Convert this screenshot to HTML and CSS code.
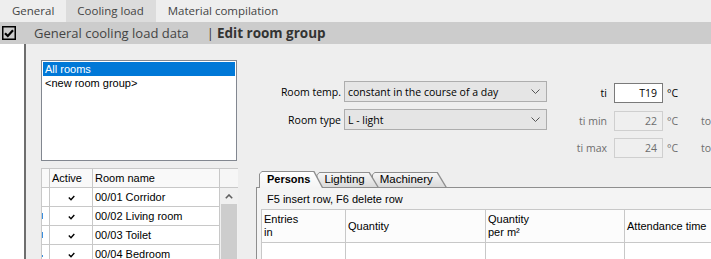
FILE: index.html
```html
<!DOCTYPE html>
<html>
<head>
<meta charset="utf-8">
<link rel="stylesheet" href="styles.css">
</head>
<body>
<div class="app">
  <div class="topnav">
    <div class="nav-tab">General</div>
    <div class="nav-tab active">Cooling load</div>
    <div class="nav-tab">Material compilation</div>
  </div>
  <div class="bar">
    <svg class="chk" width="14" height="14" viewBox="0 0 14 14"><rect x="0.75" y="0.75" width="12.5" height="12.5" fill="none" stroke="#000" stroke-width="1.5"/><path d="M3 7.2 L5.8 10 L11 4.2" fill="none" stroke="#000" stroke-width="2.2"/></svg>
    <span class="crumb">General cooling load data</span>
    <span class="sep">|</span>
    <span class="crumb-b">Edit room group</span>
  </div>
  <div class="main">
    <div class="gutter"></div>
    <div class="content">
      <div class="leftcol">
        <div class="listbox">
          <div class="li sel">All rooms</div>
          <div class="li">&lt;new room group&gt;</div>
        </div>
        <table class="rooms">
          <colgroup><col class="c-idx"><col class="c-act"><col class="c-name"><col class="c-sb"></colgroup>
          <tr class="rh"><th></th><th>Active</th><th>Room name</th><th class="sbh"></th></tr>
          <tr class="rr"><td class="idx"></td><td class="act"><svg width="7" height="6" viewBox="0 0 7 6"><path d="M0.8 2.6 L3 4.8 L6.3 1" fill="none" stroke="#000" stroke-width="1.4"/></svg></td><td>00/01 Corridor</td>
            <td class="sb" rowspan="4"><div class="sb-up"><svg width="8" height="5" viewBox="0 0 8 5"><path d="M0.8 4.2 L4 1 L7.2 4.2" fill="none" stroke="#606060" stroke-width="1.6"/></svg></div><div class="sb-thumb"></div></td></tr>
          <tr class="rr"><td class="idx"><span class="mark"></span></td><td class="act"><svg width="7" height="6" viewBox="0 0 7 6"><path d="M0.8 2.6 L3 4.8 L6.3 1" fill="none" stroke="#000" stroke-width="1.4"/></svg></td><td>00/02 Living room</td></tr>
          <tr class="rr"><td class="idx"><span class="mark"></span></td><td class="act"><svg width="7" height="6" viewBox="0 0 7 6"><path d="M0.8 2.6 L3 4.8 L6.3 1" fill="none" stroke="#000" stroke-width="1.4"/></svg></td><td>00/03 Toilet</td></tr>
          <tr class="rr"><td class="idx"><span class="mark short"></span></td><td class="act"><svg width="7" height="6" viewBox="0 0 7 6"><path d="M0.8 2.6 L3 4.8 L6.3 1" fill="none" stroke="#000" stroke-width="1.4"/></svg></td><td>00/04 Bedroom</td></tr>
        </table>
      </div>
      <div class="rightcol">
        <div class="form">
          <div class="selects">
            <span class="flabel">Room temp.</span>
            <div class="select"><span>constant in the course of a day</span><svg width="9" height="5" viewBox="0 0 9 5"><path d="M0.5 0.5 L4.5 4.5 L8.5 0.5" fill="none" stroke="#555" stroke-width="1"/></svg></div>
            <span class="flabel">Room type</span>
            <div class="select"><span>L - light</span><svg width="9" height="5" viewBox="0 0 9 5"><path d="M0.5 0.5 L4.5 4.5 L8.5 0.5" fill="none" stroke="#555" stroke-width="1"/></svg></div>
          </div>
          <div class="temps">
            <span class="tlabel">ti</span><div class="tinput">T19</div><span class="unit">°C</span><span></span>
            <span class="tlabel dim">ti min</span><div class="tinput off">22</div><span class="unit dim">°C</span><span class="to">to</span>
            <span class="tlabel dim">ti max</span><div class="tinput off">24</div><span class="unit dim">°C</span><span class="to">to<span class="warn"></span></span>
          </div>
        </div>
        <div class="tabctl">
          <div class="ptabs">
            <div class="ptab sel t1"><div class="ptab-in">Persons</div></div>
            <div class="ptab t2"><div class="ptab-in">Lighting</div></div>
            <div class="ptab t3"><div class="ptab-in">Machinery</div></div>
          </div>
          <div class="panel">
            <div class="hint">F5 insert row, F6 delete row</div>
            <table class="ptable">
              <colgroup><col class="p1"><col class="p2"><col class="p3"><col class="p4"></colgroup>
              <tr class="ph"><th>Entries<br>in</th><th>Quantity</th><th>Quantity<br>per m²</th><th>Attendance time</th></tr>
              <tr class="pr"><td></td><td></td><td></td><td></td></tr>
            </table>
          </div>
        </div>
      </div>
    </div>
  </div>
</div>
</body>
</html>
```
FILE: styles.css
```css
html, body {
  margin: 0;
  padding: 0;
}
body {
  width: 711px;
  height: 259px;
  overflow: hidden;
  background: #eeeeee;
}
.app {
  width: 711px;
  height: 259px;
  overflow: hidden;
}
.topnav {
  display: flex;
  height: 22px;
  background: #eeeeee;
  font-family: "Open Sans", sans-serif;
  font-size: 11.5px;
  color: #444;
}
.nav-tab {
  padding: 0 12px;
  line-height: 22px;
}
.nav-tab.active {
  background: #dcdcdc;
  padding: 0 12px 0 11px;
}
.bar {
  height: 22px;
  background: #cccccc;
  display: flex;
  align-items: center;
  font-family: "Open Sans", sans-serif;
  font-size: 13px;
  color: #444;
}
.chk {
  margin-left: 2px;
  flex: none;
}
.crumb {
  margin-left: 18px;
}
.sep {
  margin: 0 3px 0 18px;
  color: #333;
}
.crumb-b {
  font-weight: 700;
  font-size: 13.5px;
  color: #333;
}
.main {
  display: flex;
  height: 215px;
}
.gutter {
  width: 24px;
  flex: none;
  background: #ffffff;
  border-right: 2px solid #6e6e6e;
}
.content {
  flex: 1;
  display: flex;
  background: #eeeeee;
  min-width: 0;
}
.leftcol {
  margin-left: 15px;
  padding-top: 16px;
  width: 196px;
  flex: none;
}
.listbox {
  box-sizing: border-box;
  width: 196px;
  height: 101px;
  border: 1px solid #828790;
  background: #fff;
  padding: 1px;
  font-family: "Liberation Sans", Arial, sans-serif;
  font-size: 11px;
  color: #000;
}
.li {
  height: 14px;
  line-height: 14px;
  padding-left: 2px;
}
.li.sel {
  background: #0078d7;
  color: #fff;
}
.rooms {
  margin-top: 7px;
  border-collapse: collapse;
  table-layout: fixed;
  width: 196px;
  font-family: "Liberation Sans", Arial, sans-serif;
  font-size: 11px;
  color: #000;
  background: #fff;
}
.c-idx { width: 8px; }
.c-act { width: 43px; }
.c-name { width: 127px; }
.c-sb { width: 18px; }
.rooms th, .rooms td {
  border: 1px solid #c8c8c8;
  padding: 0 0 0 2px;
  text-align: left;
  font-weight: normal;
  white-space: nowrap;
  overflow: hidden;
  line-height: 13px;
}
.rooms .rh th {
  height: 19px;
  box-sizing: border-box;
  background: #f9f9f9;
}
.rooms .rh th.sbh { border-right: none; background: #f6f6f6; }
.rooms .rr td {
  height: 17px;
  box-sizing: border-box;
}
.rooms td.act { text-align: center; padding: 0; }
.rooms td.idx { padding: 0; background: #fff; }
.mark {
  display: block;
  width: 1px;
  height: 6px;
  margin-left: 0;
  background: #3a8fe0;
}
.mark.short { height: 2px; margin-top: 4px; }
.rooms td.sb {
  padding: 0;
  vertical-align: top;
  background: #f0f0f0;
  border-top: 1px solid #c8c8c8;
  border-bottom: none;
  border-right: none;
}
.sb-up {
  height: 16px;
  display: flex;
  align-items: center;
  justify-content: center;
}
.sb-thumb {
  height: 60px;
  margin: 0 1px 0 1px;
  background: #cdcdcd;
}
.rightcol {
  margin-left: 18px;
  flex: none;
  width: 500px;
}
.form {
  display: flex;
  padding-top: 37px;
  font-family: "Open Sans", sans-serif;
  font-size: 10.5px;
  color: #000;
}
.selects {
  display: grid;
  grid-template-columns: 86px 203px;
  grid-auto-rows: 21px;
  column-gap: 3px;
  row-gap: 7px;
  align-items: center;
  flex: none;
}
.flabel {
  text-align: right;
  color: #000;
}
.select {
  box-sizing: border-box;
  height: 21px;
  border: 1px solid #adadad;
  background: #e5e5e5;
  display: flex;
  align-items: center;
  justify-content: space-between;
  padding: 0 6px 0 3px;
  white-space: nowrap;
}
.temps {
  margin-left: 28px;
  padding-top: 2px;
  display: grid;
  grid-template-columns: 39px 53px 34px auto;
  grid-auto-rows: 20px;
  row-gap: 7.5px;
  align-items: center;
  flex: none;
  white-space: nowrap;
}
.tlabel {
  text-align: right;
  padding-right: 7px;
  color: #000;
}
.dim {
  color: #6d6d6d;
}
.tinput {
  box-sizing: border-box;
  width: 49px;
  height: 20px;
  border: 1px solid #7a7a7a;
  background: #fff;
  text-align: right;
  padding-right: 5px;
  line-height: 18px;
}
.tinput.off {
  border-color: #cfcfcf;
  background: #efefef;
  color: #6d6d6d;
}
.to {
  color: #6d6d6d;
}
.warn {
  display: inline-block;
  width: 6px;
  height: 9px;
  margin-left: 4px;
  vertical-align: -1px;
  background: #f1c27a;
}
.tabctl {
  margin-top: 13px;
  margin-left: 1px;
}
.ptabs {
  display: flex;
  align-items: flex-end;
  height: 16px;
  padding-left: 3px;
  font-family: "Liberation Sans", Arial, sans-serif;
  font-size: 11.5px;
  color: #000;
}
.ptab {
  position: relative;
  box-sizing: border-box;
  height: 15px;
  padding: 1px 0 0 1px;
  margin-right: -7px;
  background: #8e8e8e;
  clip-path: polygon(0 3px, 3px 0, calc(100% - 9px) 0, 100% 100%, 0 100%);
}
.ptab-in {
  box-sizing: border-box;
  height: 100%;
  padding: 0 14px 0 7px;
  line-height: 13px;
  background: linear-gradient(#f6f6f6, #dadada);
  clip-path: polygon(0 2px, 2px 0, calc(100% - 10px) 0, calc(100% - 1.5px) 100%, 0 100%);
  white-space: nowrap;
}
.ptab.t1 { z-index: 3; }
.ptab.t2 { z-index: 2; }
.ptab.t3 { z-index: 1; }
.ptab.sel {
  height: 17px;
  margin-bottom: -1px;
  z-index: 4;
}
.ptab.sel .ptab-in {
  background: linear-gradient(#ffffff, #f4f4f4);
  font-weight: 700;
  font-size: 11px;
  line-height: 15px;
  padding-right: 13px;
}
.panel {
  border-top: 1px solid #8e8e8e;
  border-left: 1px solid #8e8e8e;
  background: #f4f4f4;
  height: 80px;
}
.hint {
  box-sizing: border-box;
  height: 21px;
  padding: 5px 0 0 10px;
  font-family: "Liberation Sans", Arial, sans-serif;
  font-size: 11px;
  color: #000;
}
.ptable {
  margin-left: 4px;
  border-collapse: collapse;
  table-layout: fixed;
  width: 560px;
  font-family: "Liberation Sans", Arial, sans-serif;
  font-size: 11px;
  color: #000;
  background: #fff;
}
.p1 { width: 84px; }
.p2 { width: 140px; }
.p3 { width: 139px; }
.p4 { width: 197px; }
.ptable th, .ptable td {
  border: 1px solid #c8c8c8;
  padding: 0 0 0 2px;
  text-align: left;
  font-weight: normal;
  vertical-align: middle;
  line-height: 13px;
  white-space: nowrap;
}
.ptable .ph { height: 33px; }
.ptable .ph th { background: #fcfcfc; }
.ptable .pr { height: 20px; }
```
